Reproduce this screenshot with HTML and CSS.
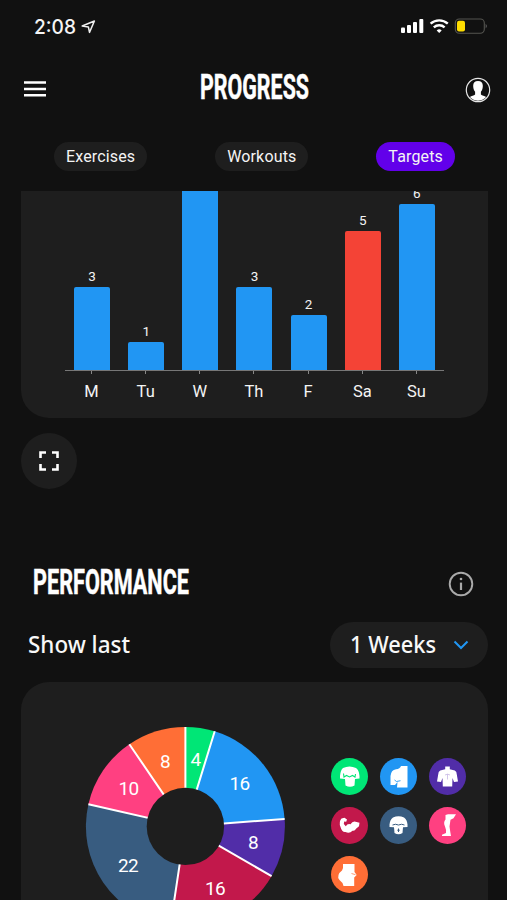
FILE: index.html
```html
<!DOCTYPE html>
<html lang="en">
<head>
<meta charset="utf-8">
<title>Progress</title>
<link rel="stylesheet" href="styles.css">
</head>
<body>
<div class="app">
  <div class="status">
    <div class="clock">
      <svg width="44" height="24"><text class="time" x="0" y="19" textLength="42" lengthAdjust="spacingAndGlyphs">2:08</text></svg>
      <svg class="loc" width="16" height="16" viewBox="0 0 16 16"><path d="M1.200 7 13.400 2 8.500 13.400 7.400 8Z" fill="none" stroke="#eee" stroke-width="1.500" stroke-linejoin="round"/></svg>
    </div>
    <svg width="88" height="18" viewBox="0 0 88 18">
      <g fill="#fff"><rect x="1" y="9.5" width="4" height="5.5" rx="1"/><rect x="7" y="7" width="4" height="8" rx="1"/><rect x="13" y="4" width="4" height="11" rx="1"/><rect x="19.300" y="1" width="4" height="14" rx="1"/><path d="m39.200 15-2.500-2.600a3.700 3.700 0 0 1 5 0Z"/></g>
      <path d="M30.600 5.700a12.800 12.800 0 0 1 17.200 0M33.800 9.400a8 8 0 0 1 10.800 0" fill="none" stroke="#fff" stroke-width="2.400"/>
      <rect x="55.300" y="1" width="29" height="14.300" rx="4" fill="none" stroke="#555550" stroke-width="1.100"/>
      <rect x="57" y="2.800" width="8" height="10.800" rx="2" fill="#fddc00"/>
      <path d="M85.700 5.800q2.200 2.200 0 4.800Z" fill="#666"/>
    </svg>
  </div>
  <header class="header">
    <svg width="24" height="18" viewBox="0 0 24 18"><path d="M1 2.500h22M1 9h22M1 15.300h22" stroke="#fff" stroke-width="2.400"/></svg>
    <svg class="title" width="114" height="36"><text class="display" x="1" y="30" textLength="109" lengthAdjust="spacingAndGlyphs">PROGRESS</text></svg>
    <svg class="user" width="26" height="26" viewBox="0 0 26 26"><circle cx="13" cy="13" r="11.700" fill="#111" stroke="#e8e8e8" stroke-width="1.200"/><path d="M13 4c3.400 0 5 2 4.800 5.200-.1 2.400-.8 4.200-1.900 5.500v2.700c1.200 1.100 3.600 1.300 5.200 2.700a11 11 0 0 1-16.200 0c1.600-1.400 4-1.600 5.200-2.700v-2.700C9 13.400 8.300 11.600 8.200 9.200 8 6 9.600 4 13 4Z" fill="#fff"/></svg>
  </header>
  <nav class="tabs">
    <span class="tab">Exercises</span>
    <span class="tab">Workouts</span>
    <span class="tab active">Targets</span>
  </nav>
  <section class="card week">
    <div class="bars">
      <div class="col"><span>3</span><i class="bar h3"></i></div>
      <div class="col"><span>1</span><i class="bar h1"></i></div>
      <div class="col"><i class="bar h7"></i></div>
      <div class="col"><span>3</span><i class="bar h3"></i></div>
      <div class="col"><span>2</span><i class="bar h2"></i></div>
      <div class="col"><span>5</span><i class="bar h5 red"></i></div>
      <div class="col"><span>6</span><i class="bar h6"></i></div>
    </div>
    <div class="days"><span>M</span><span>Tu</span><span>W</span><span>Th</span><span>F</span><span>Sa</span><span>Su</span></div>
  </section>
  <div class="expand"><svg width="20" height="20" viewBox="0 0 20 20"><path d="M1.500 7V1.500H7M13 1.500H18.500V7M18.500 13V18.500H13M7 18.500H1.500V13" fill="none" stroke="#fff" stroke-width="2.600"/></svg></div>
  <div class="section-head">
    <svg class="title" width="162" height="36"><text class="display" x="1" y="30" textLength="156" lengthAdjust="spacingAndGlyphs">PERFORMANCE</text></svg>
    <svg width="26" height="26" viewBox="0 0 26 26"><circle cx="13" cy="13" r="11.300" fill="none" stroke="#aaa" stroke-width="1.900"/><path d="M13 11.600v7.400" stroke="#aaa" stroke-width="2.200"/><circle cx="13" cy="8" r="1.300" fill="#aaa"/></svg>
  </div>
  <div class="filter">
    <svg width="106" height="32"><text class="label" x="0" y="24" textLength="102" lengthAdjust="spacingAndGlyphs">Show last</text></svg>
    <div class="select">
      <svg width="90" height="32"><text class="label" x="1" y="24" textLength="86" lengthAdjust="spacingAndGlyphs">1 Weeks</text></svg>
      <svg width="16" height="12" viewBox="0 0 16 12"><path d="m1.500 2.500 6.500 6.500 6.500-6.500" fill="none" stroke="#2196f3" stroke-width="2"/></svg>
    </div>
  </div>
  <section class="card muscles">
    <svg class="donut" width="202" height="202" viewBox="-101.400 -101.400 202 202">
      <path fill="#00e676" d="M0-99.500A99.500 99.500 0 0 1 29.320-95.080L0 0Z"/>
      <path fill="#2196f3" d="M29.320-95.080A99.500 99.500 0 0 1 99.220-7.440L0 0Z"/>
      <path fill="#512da8" d="M99.220-7.440A99.500 99.500 0 0 1 86.170 49.750L0 0Z"/>
      <path fill="#c2184b" d="M86.170 49.750A99.500 99.500 0 0 1-14.830 98.390L0 0Z"/>
      <path fill="#385c80" d="M-14.830 98.390A99.500 99.500 0 0 1-97-22.140L0 0Z"/>
      <path fill="#ff4081" d="M-97-22.140A99.500 99.500 0 0 1-56.050-82.210L0 0Z"/>
      <path fill="#ff6e36" d="M-56.050-82.210A99.500 99.500 0 0 1 0-99.500L0 0Z"/>
      <path d="M0 0V-99.500M0 0 29.320-95.080M0 0 99.220-7.440M0 0 86.170 49.750M0 0-14.830 98.390M0 0-97-22.140M0 0-56.050-82.210" stroke="#fff" stroke-width="2"/>
      <circle r="38.700" fill="#1e1e1e"/>
      <g class="slices"><text x="10" y="-60">4</text><text x="54" y="-36">16</text><text x="67.500" y="23">8</text><text x="29.500" y="69">16</text><text x="-57.500" y="46">22</text><text x="-57" y="-31">10</text><text x="-20.500" y="-58">8</text></g>
    </svg>
    <div class="legend">
      <svg class="green" viewBox="0 0 37 37"><path fill="#fff" d="M12 10q6.500-3 13 0 3 2 3.500 8v2.500l-4.500.5-.5 6.500q-4.500 2.500-9 0l-.5-6.500-5-.5V18q.5-6 3-8Z"/><path d="M12.500 15.500 13 19l2.500-1.500 3 1.500 3-1.500L24 19l.5-3" fill="none" stroke="#00e676" stroke-width="1.100"/></svg>
      <svg class="blue" viewBox="0 0 37 37"><path fill="#fff" d="M21 8H27.500V29.500H17l.5-5.500-2.500 3h-4.500V18q.5-6 5.500-6.800Q20 11 21 8Z"/><path d="m14.500 22 2 1.500 4-.8" fill="none" stroke="#2196f3" stroke-width=".9"/></svg>
      <svg class="purple" viewBox="0 0 37 37"><path fill="#fff" d="M16.200 8.500h4.600v2.700l5 1.300q2 1 2 4l1.200 7-4 .5-1.500-4-.3 8.500h-9.400l-.3-8.500-1.500 4-4-.5 1.200-7q0-3 2-4l5-1.300Z"/><path d="M16 17q2.500-1.700 5 0M18.500 16v5.500" fill="none" stroke="#c7b8e6" stroke-width=".8"/></svg>
      <svg class="crimson" viewBox="0 0 37 37"><path fill="#fff" d="m10.500 11.500 3-.8 2.500 1.800-.8 2.300-2-.3-.4 2.500 2 2.200q1.700-3 4.700-2 2-3.200 5-2.500l4 1-.5 3.500-3 2.500q-1 2.500-3.500 2-3 3.300-7 1.300-3.500.5-5-5-2-5 1-8.500Z"/></svg>
      <svg class="slate" viewBox="0 0 37 37"><path fill="#fff" d="M13 10.500q5.500-2.500 11 0 3 2 3.500 7v2.500l-4.500.3-.5 5.700q-4 2.500-8 0l-.5-5.700-4.500-.3v-2.500q.5-5 3.500-7Z"/><path d="M12.500 18q3-1.500 6 0 3-1.500 6 0M18.500 21.500v3.500m-1.200-1.800h2.400" fill="none" stroke="#385c80" stroke-width="1"/></svg>
      <svg class="pink" viewBox="0 0 37 37"><path fill="#fff" d="M16.500 8 19 7.300h8l-2.500 4-3 1.400-1 6.800.8 5.500.7 4H13v-1.200l4-1.800q.5-3-1-6.500-2-4 .5-7Z"/></svg>
      <svg class="orange" viewBox="0 0 37 37"><path fill="#fff" d="M12 8h11.500v8l2.200 3-2.500 2.500V30H12.500q-.5-3.500-4-6-2-2.500-1-5 .7-2.500 3.500-4.500 1.500-2 1-6.500Z"/><path d="m20.500 17.500 4 1.200" fill="none" stroke="#ff6e36" stroke-width=".7"/></svg>
    </div>
  </section>
</div>
</body>
</html>
```
FILE: styles.css
```css
* { box-sizing: border-box; }
body { margin: 0; background: #111; color: #f4f4f4; font-family: Roboto, sans-serif; }
svg { display: block; flex: none; }
.app { width: 507px; height: 900px; overflow: hidden; }
.status { height: 54px; padding: 0 19px 0 34px; display: flex; align-items: center; justify-content: space-between; }
.clock { display: flex; align-items: center; gap: 3px; }
.time { font: 500 20px Inter, sans-serif; fill: #f4f4f4; }
.header { height: 70px; padding: 0 16px 0 23px; display: flex; align-items: center; justify-content: space-between; }
.display { font: 700 35px Roboto, sans-serif; fill: #fff; stroke: #fff; stroke-width: .5px; }
.title { margin: -5px 0 0 -1px; overflow: visible; }
.user { margin-top: 2px; }
.tabs { height: 67px; padding: 18px 52px 0 54px; display: flex; justify-content: space-between; align-items: flex-start; }
.tab { height: 29px; padding: 0 12px; border-radius: 15px; background: #1e1e1e; font-size: 16px; line-height: 29px; letter-spacing: .15px; }
.active { background: #6200ea; }
.card { width: 467px; margin-left: 21px; background: #1e1e1e; overflow: hidden; }
.week { height: 227px; padding: 0 44px; border-radius: 0 0 28px 28px; }
.bars { height: 180px; display: grid; grid-template-columns: repeat(7, 1fr); border-bottom: 1px solid #777; }
.col { display: flex; flex-direction: column; align-items: center; justify-content: flex-end; min-height: 0; height: 179px; font-size: 13.5px; line-height: 16px; }
.col span { margin-bottom: 3px; }
.bar { width: 36px; flex: none; border-radius: 2px 2px 0 0; background: #2196f3; }
.red { background: #f44336; }
.h1 { height: 28px; }
.h2 { height: 55px; }
.h3 { height: 83px; }
.h5 { height: 139px; }
.h6 { height: 166px; }
.h7 { height: 179px; border-radius: 0; }
.days { display: grid; grid-template-columns: repeat(7, 1fr); font-size: 16.5px; line-height: 20px; text-align: center; }
.days span { padding-right: 1px; }
.days span::before { content: ""; display: block; width: 1px; height: 3px; margin: 0 auto 8px; background: #888; }
.expand { width: 56px; height: 56px; margin: 15px 0 0 21px; border-radius: 50%; background: #1e1e1e; display: grid; place-items: center; }
.section-head { margin-top: 76px; height: 38px; padding: 0 33px; display: flex; align-items: center; justify-content: space-between; }
.filter { margin-top: 19px; height: 46px; padding: 0 19px 0 28px; display: flex; align-items: center; justify-content: space-between; }
.label { font: 500 23px "Noto Sans", sans-serif; fill: #f8f8f8; }
.select { width: 158px; height: 46px; padding: 0 19px; border-radius: 23px; background: #1e1e1e; display: flex; align-items: center; justify-content: space-between; }
.muscles { margin-top: 14px; height: 240px; padding: 43px 0 0 63px; border-radius: 28px 28px 0 0; display: flex; align-items: flex-start; }
.slices { font-size: 19px; letter-spacing: -.7px; fill: #fff; text-anchor: middle; }
.legend { margin: 33px 0 0 45px; display: grid; grid-template-columns: repeat(3, 37px); gap: 12px; }
.legend svg { width: 37px; height: 37px; border-radius: 50%; }
.green { background: #00e676; }
.blue { background: #2196f3; }
.purple { background: #512da8; }
.crimson { background: #c2184b; }
.slate { background: #385c80; }
.pink { background: #ff4081; }
.orange { background: #ff6e36; }
```
